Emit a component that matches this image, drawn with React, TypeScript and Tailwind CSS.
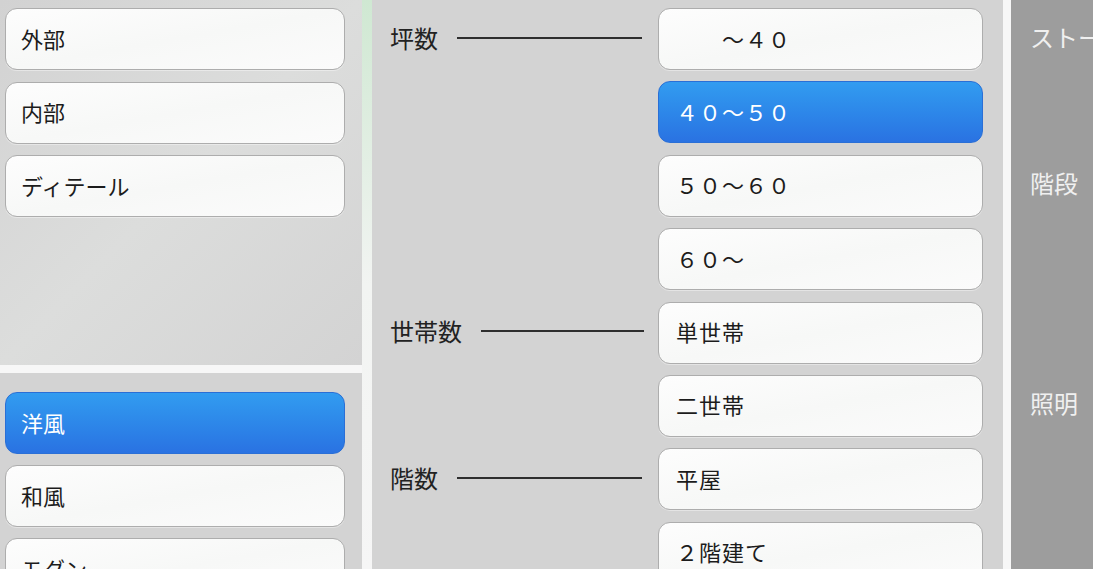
import React from 'react'

const font = { fontFamily: '"Noto Sans CJK JP", "Noto Sans", sans-serif' }

type Item = { text: string; active?: boolean; shift?: string }

function Pill({ text, active, className = '' }: { text: string; active?: boolean; className?: string }) {
  return (
    <div
      className={
        'flex items-center h-[62px] pb-[3px] rounded-[12px] border text-[22px] leading-none whitespace-pre ' +
        (active
          ? 'border-[#2a6fd6] bg-gradient-to-b from-[#329cf0] to-[#2a72e2] text-white'
          : 'border-[#adadad] bg-gradient-to-br from-[#fdfdfd] via-[#f7f8f7] to-[#fbfbfb] text-[#1c1c1c] shadow-[0_1px_0_rgba(255,255,255,0.4)]') +
        ' ' +
        className
      }
    >
      {text}
    </div>
  )
}

const topItems: Item[] = [{ text: '外部' }, { text: '内部' }, { text: 'ディテール' }]
const styleItems: Item[] = [{ text: '洋風', active: true }, { text: '和風' }, { text: 'モダン' }]

const rows: { label?: string; item: Item }[] = [
  { label: '坪数', item: { text: '　　～４０' } },
  { item: { text: '４０～５０', active: true } },
  { item: { text: '５０～６０' } },
  { item: { text: '６０～', shift: 'ml-[-2px]' } },
  { label: '世帯数', item: { text: '単世帯', shift: 'ml-[-2px]' } },
  { item: { text: '二世帯' } },
  { label: '階数', item: { text: '平屋' } },
  { item: { text: '２階建て' } },
]

export default function App() {
  return (
    <div className="w-[1093px] h-[569px] overflow-hidden flex bg-[#f7f7f7]" style={font}>
      {/* left column */}
      <div className="w-[362px] flex flex-col gap-[8px] shrink-0">
        <div className="h-[365px] shrink-0 bg-gradient-to-br from-[#d2d2d2] via-[#dcdddc] to-[#d3d3d3] pt-[8px] pl-[5px] pr-[17px] flex flex-col gap-[11.5px]">
          {topItems.map((it) => (
            <Pill key={it.text} text={it.text} active={it.active} className="pl-[15px] shrink-0" />
          ))}
        </div>
        <div className="flex-1 min-h-0 bg-[#d3d3d3] pt-[19px] pl-[5px] pr-[17px] flex flex-col gap-[11px]">
          {styleItems.map((it) => (
            <Pill key={it.text} text={it.text} active={it.active} className="pl-[15px] shrink-0" />
          ))}
        </div>
      </div>

      {/* divider with a hint of the background photo */}
      <div className="w-[10px] shrink-0 bg-gradient-to-b from-[#cfe8d2] via-[#f2f4f2] to-[#f6f6f6]" />

      {/* middle panel */}
      <div className="w-[631px] shrink-0 bg-[#d3d3d3] pt-[8px] pl-[18px] pr-[20px] flex flex-col gap-[11.4px]">
        {rows.map((r, i) => (
          <div key={i} className="flex items-center shrink-0">
            <div className="flex-1 flex items-center text-[24px] text-[#222] leading-none pb-[3px]">
              {r.label && (
                <>
                  <span>{r.label}</span>
                  <span className="flex-1 h-[2px] bg-[#2e2e2e] ml-[19px] mr-[16px]" />
                </>
              )}
            </div>
            <Pill
              text={r.item.text}
              active={r.item.active}
              className={'w-[325px] pl-[17px] tracking-[1px] ' + (r.item.shift ?? '')}
            />
          </div>
        ))}
      </div>

      <div className="w-[8px] shrink-0 bg-[#f7f7f7]" />

      {/* right panel */}
      <div className="flex-1 bg-[#9d9d9d] pl-[19px] text-[24px] text-[#f0f0f0] leading-none whitespace-nowrap flex flex-col">
        <div className="h-[74px] shrink-0 flex items-center">ストーブ</div>
        <div className="h-[218px] shrink-0 flex items-center">階段</div>
        <div className="h-[222px] shrink-0 flex items-center">照明</div>
      </div>
    </div>
  )
}
